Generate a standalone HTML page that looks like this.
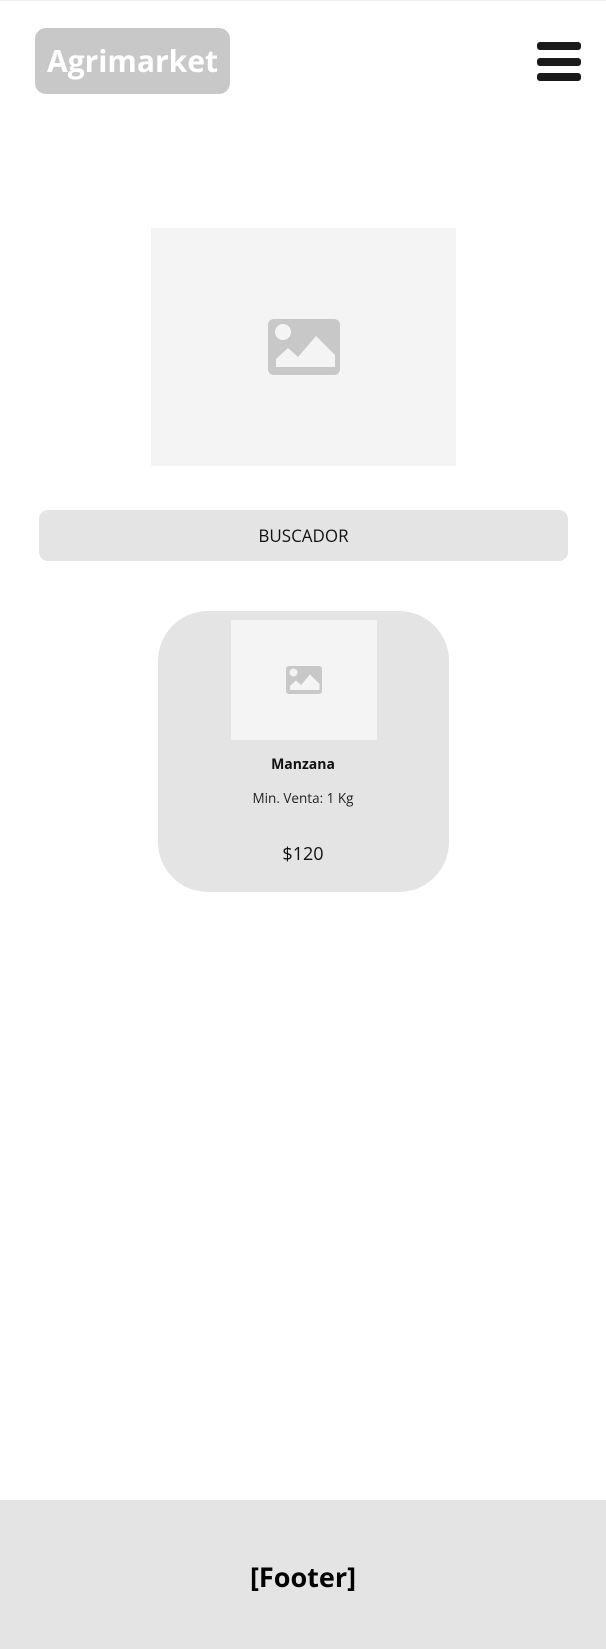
<!DOCTYPE html>
<html><head><meta charset="utf-8"><style>
*{margin:0;padding:0;box-sizing:border-box}
body{width:606px;height:1648px;background:#fff;position:relative;font-family:"Open Sans","Liberation Sans",sans-serif;overflow:hidden;border-top:1px solid #eee}
.a{position:absolute}
.logo{left:35px;top:27px;width:195px;height:66px;background:#c8c8c8;border-radius:11px;color:#fff;font-weight:bold;font-size:30px;line-height:66px;text-align:center}
.bar{left:537px;width:44px;height:8px;background:#1a1a1a;border-radius:3px}
.hero{left:151px;top:227px;width:305px;height:238px;background:#f4f4f4}
.search{left:39px;top:509px;width:529px;height:51px;background:#e4e4e4;border-radius:9px;text-align:center;line-height:51px;font-size:17px;color:#111}
.card{left:158px;top:610px;width:291px;height:281px;background:#e4e4e4;border-radius:50px}
.inner{left:231px;top:619px;width:146px;height:120px;background:#f4f4f4}
.t{left:0;width:606px;text-align:center;color:#111}
.footer{left:0;top:1499px;width:606px;height:149px;background:#e4e4e4}
</style></head><body>
<div class="a logo">Agrimarket</div>
<div class="a bar" style="top:41px"></div>
<div class="a bar" style="top:57px"></div>
<div class="a bar" style="top:72px"></div>
<div class="a hero"></div>
<svg class="a" style="left:268px;top:318px" width="72" height="56" viewBox="0 0 72 56"><rect width="72" height="56" rx="6" fill="#c8c8c8"/><circle cx="15" cy="13" r="8" fill="#f4f4f4"/><path d="M8 48 L8 40 L20 29 L30 38 L48 17 L67 36 L67 48 Z" fill="#f4f4f4"/></svg>
<div class="a search">BUSCADOR</div>
<div class="a card"></div>
<div class="a inner"></div>
<svg class="a" style="left:286px;top:665px" width="36" height="28" viewBox="0 0 72 56"><rect width="72" height="56" rx="6" fill="#c8c8c8"/><circle cx="15" cy="13" r="8" fill="#f4f4f4"/><path d="M8 48 L8 40 L20 29 L30 38 L48 17 L67 36 L67 48 Z" fill="#f4f4f4"/></svg>
<div class="a t" style="top:754px;font-size:14px;font-weight:bold;line-height:20px">Manzana</div>
<div class="a t" style="top:788px;font-size:13.5px;line-height:18px;color:#222">Min. Venta: 1 Kg</div>
<div class="a t" style="top:841px;font-size:18px;line-height:24px">$120</div>
<div class="a footer"></div>
<div class="a t" style="top:1558px;font-size:27px;font-weight:bold;line-height:36px;color:#000">[Footer]</div>
</body></html>
